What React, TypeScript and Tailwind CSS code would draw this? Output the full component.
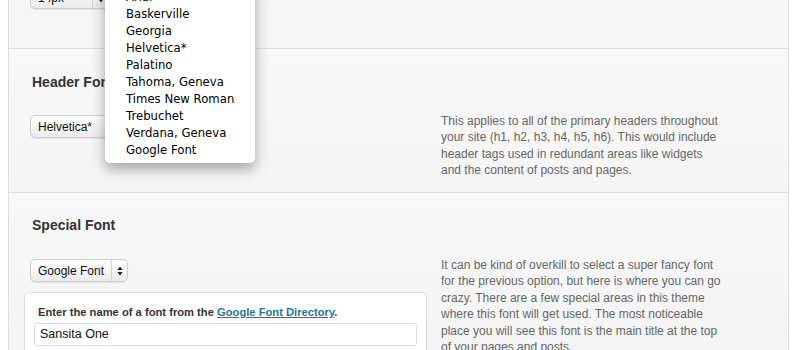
import React from 'react';

const fonts = [
  'Arial',
  'Baskerville',
  'Georgia',
  'Helvetica*',
  'Palatino',
  'Tahoma, Geneva',
  'Times New Roman',
  'Trebuchet',
  'Verdana, Geneva',
  'Google Font',
];

const headerText = [
  'This applies to all of the primary headers throughout',
  'your site (h1, h2, h3, h4, h5, h6). This would include',
  'header tags used in redundant areas like widgets',
  'and the content of posts and pages.',
];

const specialText = [
  'It can be kind of overkill to select a super fancy font',
  'for the previous option, but here is where you can go',
  'crazy. There are a few special areas in this theme',
  'where this font will get used. The most noticeable',
  'place you will see this font is the main title at the top',
  'of your pages and posts.',
];

function Arrows() {
  return (
    <svg width="6" height="10" viewBox="0 0 6 10" className="block">
      <path d="M3 0.5 L5.6 4 L0.4 4 Z" fill="#222" />
      <path d="M3 9.5 L5.6 6 L0.4 6 Z" fill="#222" />
    </svg>
  );
}

function Select({ label, width, divider }: { label: string; width: string; divider: string }) {
  return (
    <div
      className={`flex h-[23px] items-center rounded-[5px] border border-[#cfcfcf] bg-gradient-to-b from-white to-[#ebebeb] shadow-[0_1px_1px_rgba(0,0,0,0.08)] ${width}`}
    >
      <span className={`pl-[7px] text-[12px] text-[#111] ${divider}`}>{label}</span>
      <span className="h-full border-l border-[#d4d4d4]" />
      <span className="flex flex-1 justify-center">
        <Arrows />
      </span>
    </div>
  );
}

function Description({ lines }: { lines: string[] }) {
  return (
    <p className="text-[12px] leading-[16.4px] text-[#666]">
      {lines.map((l, i) => (
        <span key={i} className="block whitespace-nowrap">
          {l}
        </span>
      ))}
    </p>
  );
}

export default function App() {
  return (
    <div className="relative h-[350px] w-[798px] overflow-hidden bg-white font-['Liberation_Sans',Arial,sans-serif]">
      <div className="ml-[8px] w-[781px] border-x border-[#dedede] bg-[#f6f6f6]">
        {/* size option, mostly scrolled off */}
        <section className="flex h-[49px] items-start border-b border-[#dedede] pl-[21px]">
          <div className="-mt-[14px]">
            <Select label="14px" width="w-[80px]" divider="w-[61px]" />
          </div>
        </section>

        {/* header font */}
        <section className="h-[144px] border-b border-[#dedede] bg-gradient-to-b from-[#f8f8f8] to-[#f5f5f5] pl-[21px] pt-[23px]">
          <h3 className="pl-[2px] text-[14px] leading-[20px] font-bold text-[#333]">Header Font</h3>
          <div className="mt-[21px] flex">
            <div className="w-[411px] pt-[2px]">
              <Select label="Helvetica*" width="w-[96px]" divider="w-[78px]" />
            </div>
            <Description lines={headerText} />
          </div>
        </section>

        {/* special font */}
        <section className="h-[157px] bg-gradient-to-b from-[#f8f8f8] to-[#f4f4f4] pl-[15px] pt-[22px]">
          <h3 className="pl-[8px] text-[14px] leading-[20px] font-bold text-[#333]">Special Font</h3>
          <div className="mt-[22px] flex">
            <div className="w-[417px]">
              <div className="ml-[6px] mt-[2px]">
                <Select label="Google Font" width="w-[98px]" divider="w-[80px]" />
              </div>
              <div className="mt-[10px] w-[403px] rounded-[5px] border border-[#dcdcdc] bg-white px-[9px] pt-[12px] pb-[8px]">
                <p className="pl-[4px] text-[11.2px] leading-[14px] font-bold text-[#333]">
                  Enter the name of a font from the{' '}
                  <a className="text-[#21759b] underline">Google Font Directory</a>.
                </p>
                <div className="mt-[4px] flex h-[23px] items-center rounded-[3px] border border-[#dcdcdc] bg-white px-[5px] text-[12.5px] text-[#111]">
                  Sansita One
                </div>
              </div>
            </div>
            <Description lines={specialText} />
          </div>
        </section>
      </div>

      {/* open font menu */}
      <ul className="absolute left-[105px] top-[-15px] w-[150px] rounded-b-[5px] bg-white pt-[4px] pb-[4px] font-['DejaVu_Sans',sans-serif] text-[11.7px] text-black shadow-[0_6px_14px_rgba(0,0,0,0.35)]">
        {fonts.map((f, i) => (
          <li key={f} className="relative h-[17px] pl-[21px] leading-[17px]">
            {i === 0 && <span className="absolute left-[7px] top-0">✓</span>}
            {f}
          </li>
        ))}
      </ul>
    </div>
  );
}
